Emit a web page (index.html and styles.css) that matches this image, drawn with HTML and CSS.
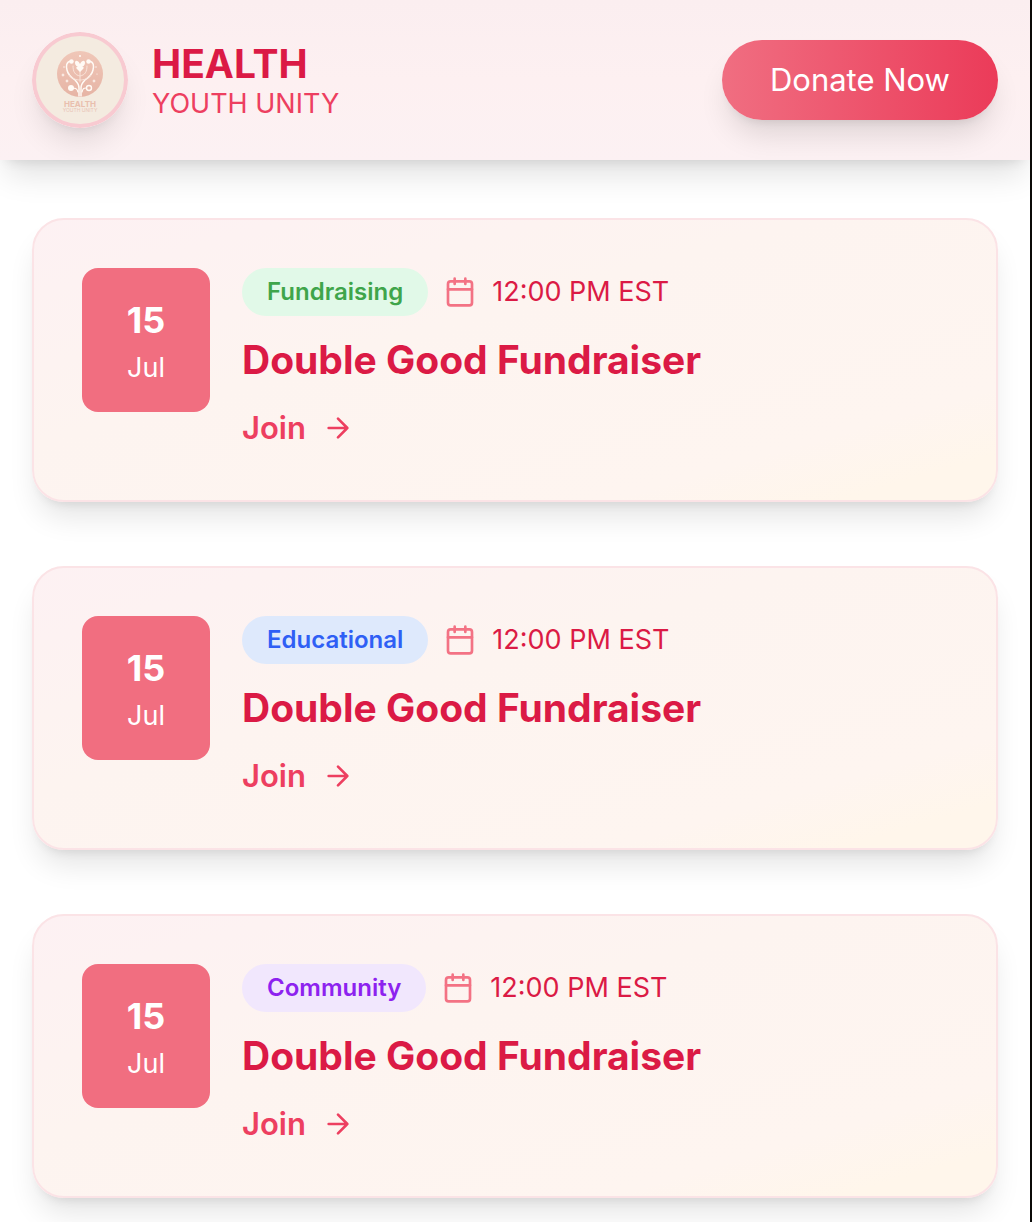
FILE: index.html
```html
<!DOCTYPE html>
<html lang="en">
<head>
<meta charset="utf-8">
<meta name="viewport" content="width=device-width, initial-scale=1">
<title>Health Youth Unity – Events</title>
<link rel="stylesheet" href="styles.css">
</head>
<body>
<svg class="sprite" aria-hidden="true">
  <symbol id="calendar" viewBox="0 0 24 24"><path d="M8 2v4M16 2v4M3 10h18"/><rect x="3" y="4" width="18" height="18" rx="2"/></symbol>
  <symbol id="arrow" viewBox="0 0 24 24"><path d="M5 12h14M12 5l7 7-7 7"/></symbol>
</svg>
<header class="header">
  <a class="brand" href="#">
    <svg class="logo" viewBox="0 0 96 96" aria-hidden="true">
      <defs>
        <linearGradient id="disc" x1="0" y1="0" x2="0" y2="1"><stop offset="0" stop-color="#f0c7b8"/><stop offset="1" stop-color="#e6b4a5"/></linearGradient>
      </defs>
      <circle cx="48" cy="48" r="48" fill="#f8cad1"/>
      <circle cx="48" cy="48" r="44" fill="#f4ebe0"/>
      <circle cx="48" cy="42" r="23" fill="url(#disc)"/>
      <g fill="none" stroke="#fffaf5" stroke-linecap="round">
        <path stroke-width="1.500" d="M39 29c-5 1-5 5-4 9 1 5 5 8 8 10 3 3 4 5 4 8v8M57 29c5 1 5 5 4 9-1 5-5 8-8 10-3 3-4 5-4 8v8"/>
        <path stroke-width="1" stroke="#f9e3d9" d="M41 34c0 6 2 9 7 10 5-1 7-4 7-10M37 43c4 4 7 5 11 5s7-1 11-5M48 38v12"/>
        <path stroke-width="1.200" d="M46 60c-1-4-3-4-6-4M50 60c1-4 2-4 4-4"/>
        <circle stroke-width="1.400" cx="57" cy="56" r="2.500"/>
      </g>
      <g fill="#fffaf5">
        <circle cx="39.500" cy="29.500" r="2.200"/><circle cx="56.500" cy="29.500" r="2.200"/><circle cx="39" cy="56" r="3"/>
        <path d="M48 32c-2-4-5-4-5-1 0 2 2 4 5 5 3-1 5-3 5-5 0-3-3-3-5 1zM48 36c-3-2-5-1-3 1l3 3 3-3c2-2 0-3-3-1z"/>
        <circle cx="48" cy="24" r="1"/><path d="M31 41l.6 1.400 1.400.6-1.400.6-.6 1.400-.6-1.400-1.400-.6 1.400-.6zM35 47l.6 1.400 1.400.6-1.400.6-.6 1.400-.6-1.400-1.400-.6 1.400-.6zM62 47l.6 1.400 1.400.6-1.400.6-.6 1.400-.6-1.400-1.400-.6 1.400-.6z"/>
        <circle cx="32" cy="35" r=".7"/><circle cx="64" cy="35" r=".7"/><circle cx="65" cy="42" r=".6"/>
      </g>
      <text class="logo-name" x="48" y="75" text-anchor="middle">HEALTH</text>
      <text class="logo-sub" x="48" y="80" text-anchor="middle">YOUTH UNITY</text>
    </svg>
    <span class="brand-text">
      <span class="brand-name">HEALTH</span>
      <span class="brand-sub">YOUTH UNITY</span>
    </span>
  </a>
  <button class="donate" type="button">Donate Now</button>
</header>
<main class="events">
  <article class="card">
    <time class="date" datetime="07-15"><span class="day">15</span><span class="month">Jul</span></time>
    <div class="details">
      <div class="meta">
        <span class="tag fundraising">Fundraising</span>
        <span class="when"><svg class="icon" aria-hidden="true"><use href="#calendar"/></svg>12:00 PM EST</span>
      </div>
      <h2 class="title">Double Good Fundraiser</h2>
      <a class="join" href="#">Join<svg class="icon" aria-hidden="true"><use href="#arrow"/></svg></a>
    </div>
  </article>
  <article class="card">
    <time class="date" datetime="07-15"><span class="day">15</span><span class="month">Jul</span></time>
    <div class="details">
      <div class="meta">
        <span class="tag educational">Educational</span>
        <span class="when"><svg class="icon" aria-hidden="true"><use href="#calendar"/></svg>12:00 PM EST</span>
      </div>
      <h2 class="title">Double Good Fundraiser</h2>
      <a class="join" href="#">Join<svg class="icon" aria-hidden="true"><use href="#arrow"/></svg></a>
    </div>
  </article>
  <article class="card">
    <time class="date" datetime="07-15"><span class="day">15</span><span class="month">Jul</span></time>
    <div class="details">
      <div class="meta">
        <span class="tag community">Community</span>
        <span class="when"><svg class="icon" aria-hidden="true"><use href="#calendar"/></svg>12:00 PM EST</span>
      </div>
      <h2 class="title">Double Good Fundraiser</h2>
      <a class="join" href="#">Join<svg class="icon" aria-hidden="true"><use href="#arrow"/></svg></a>
    </div>
  </article>
</main>
</body>
</html>
```
FILE: styles.css
```css
* { box-sizing: border-box; }

html { background: #fff; }

body {
  margin: 0;
  min-height: 100vh;
  border-right: 2px solid #0b0a08;
  font-family: Inter, "Liberation Sans", sans-serif;
  color: #db1a45;
}

a { color: inherit; text-decoration: none; }

.sprite { display: none; }

.header {
  display: flex;
  align-items: center;
  justify-content: space-between;
  padding: 32px;
  background: linear-gradient(#fbeef0, #fdf0f1 50%, #fcf1f3);
  box-shadow: 0 20px 30px -6px rgb(0 0 0 / 12%), 0 8px 12px -8px rgb(0 0 0 / 12%);
}

.brand { display: flex; align-items: center; gap: 24px; }

.logo {
  width: 96px;
  height: 96px;
  border-radius: 50%;
  box-shadow: 0 20px 30px -6px rgb(0 0 0 / 10%), 0 8px 12px -8px rgb(0 0 0 / 10%);
}

.logo-name { font-size: 8px; font-weight: 700; fill: #e9bfae; }
.logo-sub { font-size: 5px; fill: #e9c4b6; }

.brand-text { display: flex; flex-direction: column; padding-top: 8px; }
.brand-name { font-size: 39px; line-height: 40px; font-weight: 700; }
.brand-sub { font-size: 27px; line-height: 40px; color: #ed3f60; }

.donate {
  padding: 16px 48px;
  border: 0;
  border-radius: 40px;
  background: linear-gradient(90deg, #f06e81, #eb3b59);
  box-shadow: 0 20px 30px -6px rgb(0 0 0 / 12%), 0 8px 12px -8px rgb(0 0 0 / 12%);
  font: 400 31px/48px Inter, "Liberation Sans", sans-serif;
  color: #fff;
}

.events {
  display: flex;
  flex-direction: column;
  gap: 64px;
  padding: 58px 32px 24px;
}

.card {
  display: flex;
  align-items: flex-start;
  gap: 32px;
  padding: 48px;
  border: 2px solid #fbe3e6;
  border-radius: 32px;
  background: linear-gradient(to bottom right, #fdf1f3, #fdf4f0 40%, #fef5f0 80%, #fff6eb 92%);
  box-shadow: 0 20px 30px -6px rgb(0 0 0 / 11%), 0 8px 12px -8px rgb(0 0 0 / 12%);
}

.date {
  display: flex;
  flex-direction: column;
  align-items: center;
  width: 128px;
  padding: 24px 0;
  border-radius: 16px;
  background: #f16e80;
  color: #fff;
}

.day { font-size: 36px; line-height: 56px; font-weight: 700; }
.month { font-size: 27px; line-height: 40px; }

.details { display: flex; flex-direction: column; align-items: flex-start; gap: 16px; }
.meta { display: flex; align-items: center; gap: 16px; }

.tag {
  padding: 0 25px;
  border-radius: 24px;
  font-size: 24px;
  line-height: 48px;
  font-weight: 600;
}

.fundraising { background: #e1f9e8; color: #3fa54b; }
.educational { background: #dee9fc; color: #2f5ff5; }
.community { background: #f1e7fd; color: #8d22ef; }

.when { display: flex; align-items: center; gap: 16px; font-size: 27px; line-height: 40px; }

.icon {
  width: 32px;
  height: 32px;
  fill: none;
  stroke: currentColor;
  stroke-width: 2;
  stroke-linecap: round;
  stroke-linejoin: round;
}

.when .icon { color: #f37284; }

.title { margin: 0; font-size: 39px; line-height: 56px; font-weight: 700; }

.join {
  display: flex;
  align-items: center;
  gap: 16px;
  font-size: 31px;
  line-height: 48px;
  font-weight: 600;
  color: #ed3f60;
}
```
